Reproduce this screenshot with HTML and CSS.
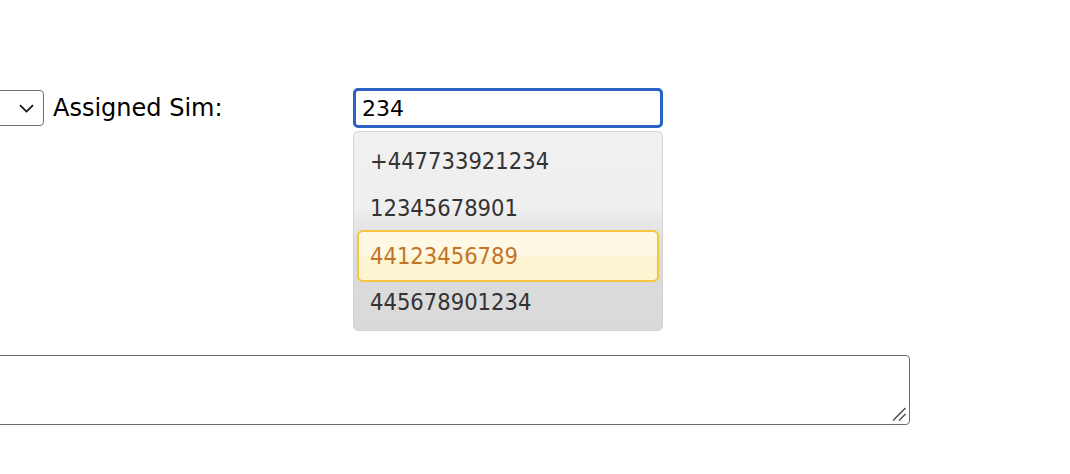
FILE: index.html
```html
<!DOCTYPE html>
<html>
<head>
<meta charset="utf-8">
<link rel="stylesheet" href="styles.css">
</head>
<body>
<div class="page">
  <div class="row">
    <div class="select-box">
      <svg class="chev" width="15" height="9" viewBox="0 0 15 9"><path d="M1 1.2 L7.5 7.6 L14 1.2" fill="none" stroke="#111" stroke-width="1.7"/></svg>
    </div>
    <label class="label">Assigned Sim:</label>
    <div class="field">
      <input class="sim-input" type="text" value="234">
      <ul class="menu">
        <li class="item">+447733921234</li>
        <li class="item">12345678901</li>
        <li class="item hover">44123456789</li>
        <li class="item">445678901234</li>
      </ul>
    </div>
  </div>
  <div class="notes-wrap">
    <textarea class="notes"></textarea>
    <svg class="grip" width="16" height="16" viewBox="0 0 16 16"><path d="M2 14.5 L14.5 2 M8 14.5 L14.5 8" stroke="#555" stroke-width="1.6" fill="none"/></svg>
  </div>
</div>
</body>
</html>
```

FILE: styles.css
```css
html, body {
  margin: 0;
  padding: 0;
  background: #fff;
  overflow: hidden;
}
.page {
  padding-top: 88px;
  font-family: "DejaVu Sans", Verdana, sans-serif;
}
.row {
  display: flex;
  align-items: center;
  height: 40px;
}
.select-box {
  box-sizing: border-box;
  width: 62px;
  height: 36px;
  margin-left: -18px;
  border: 1.5px solid #6f6f6f;
  border-radius: 4px;
  display: flex;
  align-items: center;
  justify-content: flex-end;
  padding-right: 9px;
}
.chev { display: block; }
.label {
  width: 300px;
  margin-left: 9px;
  font-size: 24px;
  color: #000;
  line-height: 40px;
}
.field {
  position: relative;
  width: 310px;
  height: 40px;
}
.sim-input {
  box-sizing: border-box;
  width: 310px;
  height: 40px;
  margin: 0;
  border: 3px solid #2a62c6;
  border-radius: 5px;
  padding: 0 6px;
  font-family: "DejaVu Sans", Verdana, sans-serif;
  font-size: 22px;
  color: #000;
  outline: none;
  background: #fff;
}
.menu {
  position: absolute;
  top: 43px;
  left: 0;
  box-sizing: border-box;
  width: 310px;
  height: 200px;
  margin: 0;
  padding: 6px 3px;
  list-style: none;
  border: 1px solid #d4d4d4;
  border-radius: 5px;
  background: linear-gradient(#f0f0f0 0, #efefef 38%, #dcdcdc 58%, #dadada 100%);
  font-family: "DejaVu Sans Condensed", "DejaVu Sans", sans-serif;
  font-stretch: condensed;
  font-size: 23.5px;
  color: #333;
}
.item {
  box-sizing: border-box;
  height: 47px;
  line-height: 47px;
  padding-left: 13px;
}
.item.hover {
  height: 52px;
  line-height: 49px;
  margin: -2px 0 -3px;
  padding-left: 11px;
  border: 2px solid #f4c73e;
  border-radius: 6px;
  background: linear-gradient(#fef9e6 0, #fef8e4 48%, #fdf4d2 52%, #fdf4d2 100%);
  color: #c27529;
}
.notes-wrap {
  position: relative;
  margin: 227px 0 0 -20px;
  width: 930px;
  height: 70px;
}
.notes {
  display: block;
  box-sizing: border-box;
  margin: 0;
  width: 930px;
  height: 70px;
  border: 1.5px solid #6f6f6f;
  border-radius: 4px;
  resize: none;
  background: #fff;
}
.grip {
  position: absolute;
  right: 3px;
  bottom: 3px;
}
```
